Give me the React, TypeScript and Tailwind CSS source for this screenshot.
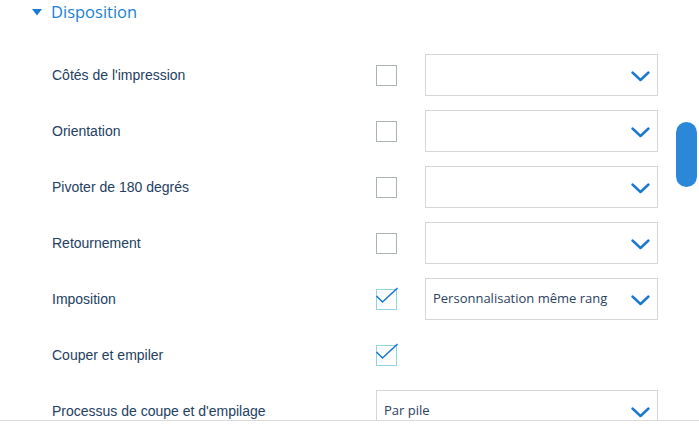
import React from "react";

const Chevron = () => (
  <svg width="19" height="11" viewBox="0 0 19 11" className="shrink-0">
    <path d="M1.5 1.5 L9.5 9 L17.5 1.5" fill="none" stroke="#1a78d0" strokeWidth="2.4" strokeLinecap="round" strokeLinejoin="round" />
  </svg>
);

const Check = ({ checked }: { checked: boolean }) =>
  checked ? (
    <div className="relative w-[21px] h-[21px] border border-[#8fd3e8] bg-white">
      <svg width="24" height="18" viewBox="0 0 24 18" className="absolute left-[-1px] top-[-5px] overflow-visible">
        <path d="M0.5 11 L6.5 17 L21.5 3" fill="none" stroke="#1a78d0" strokeWidth="1.6" />
      </svg>
    </div>
  ) : (
    <div className="w-[21px] h-[21px] border border-[#aab3b6] bg-white" />
  );

const Select = ({ value, wide }: { value?: string; wide?: boolean }) => (
  <div
    className={`${wide ? "w-[282px]" : "w-[233px]"} h-[42px] border border-[#d6d6d6] bg-white flex items-center justify-between pl-[7px] pr-[7px]`}
  >
    <span className="text-[13px] text-[#2a4160] whitespace-nowrap" style={{ fontFamily: "'Open Sans', sans-serif" }}>
      {value ?? ""}
    </span>
    <div className="pt-[3px]">
      <Chevron />
    </div>
  </div>
);

type Row = { label: string; check?: boolean; checked?: boolean; select?: boolean; value?: string; wide?: boolean };

const rows: Row[] = [
  { label: "Côtés de l'impression", check: true, checked: false, select: true },
  { label: "Orientation", check: true, checked: false, select: true },
  { label: "Pivoter de 180 degrés", check: true, checked: false, select: true },
  { label: "Retournement", check: true, checked: false, select: true },
  { label: "Imposition", check: true, checked: true, select: true, value: "Personnalisation même rang" },
  { label: "Couper et empiler", check: true, checked: true },
  { label: "Processus de coupe et d'empilage", select: true, wide: true, value: "Par pile" },
];

export default function App() {
  return (
    <div className="relative w-[699px] h-[429px] bg-white overflow-hidden" style={{ fontFamily: "'Liberation Sans', Arial, sans-serif" }}>
      <div className="h-[420px] overflow-hidden">
        <div className="flex items-center h-[25px] pl-[32px] gap-[9px]">
          <svg width="10" height="7" viewBox="0 0 10 7">
            <path d="M0 0 L10 0 L5 6.5 Z" fill="#1b7bd2" />
          </svg>
          <span className="text-[16.5px] text-[#1b7fd4] leading-none" style={{ fontFamily: "'Open Sans', sans-serif" }}>
            Disposition
          </span>
        </div>
        <div className="pt-[22px]">
          {rows.map((r, i) => (
            <div key={i} className="flex items-center h-[56px]">
              <div className="w-[376px] pl-[52px] pt-[1px] text-[14px] text-[#23405f] whitespace-nowrap">{r.label}</div>
              {r.check && (
                <div className="w-[49px]">
                  <Check checked={!!r.checked} />
                </div>
              )}
              {r.select && <Select value={r.value} wide={r.wide} />}
            </div>
          ))}
        </div>
      </div>
      <div className="border-t border-[#d9d9d9]" />
      <div className="absolute left-[676px] top-[122px] w-[21px] h-[65px] rounded-full bg-[#2b88d9]" />
    </div>
  );
}
